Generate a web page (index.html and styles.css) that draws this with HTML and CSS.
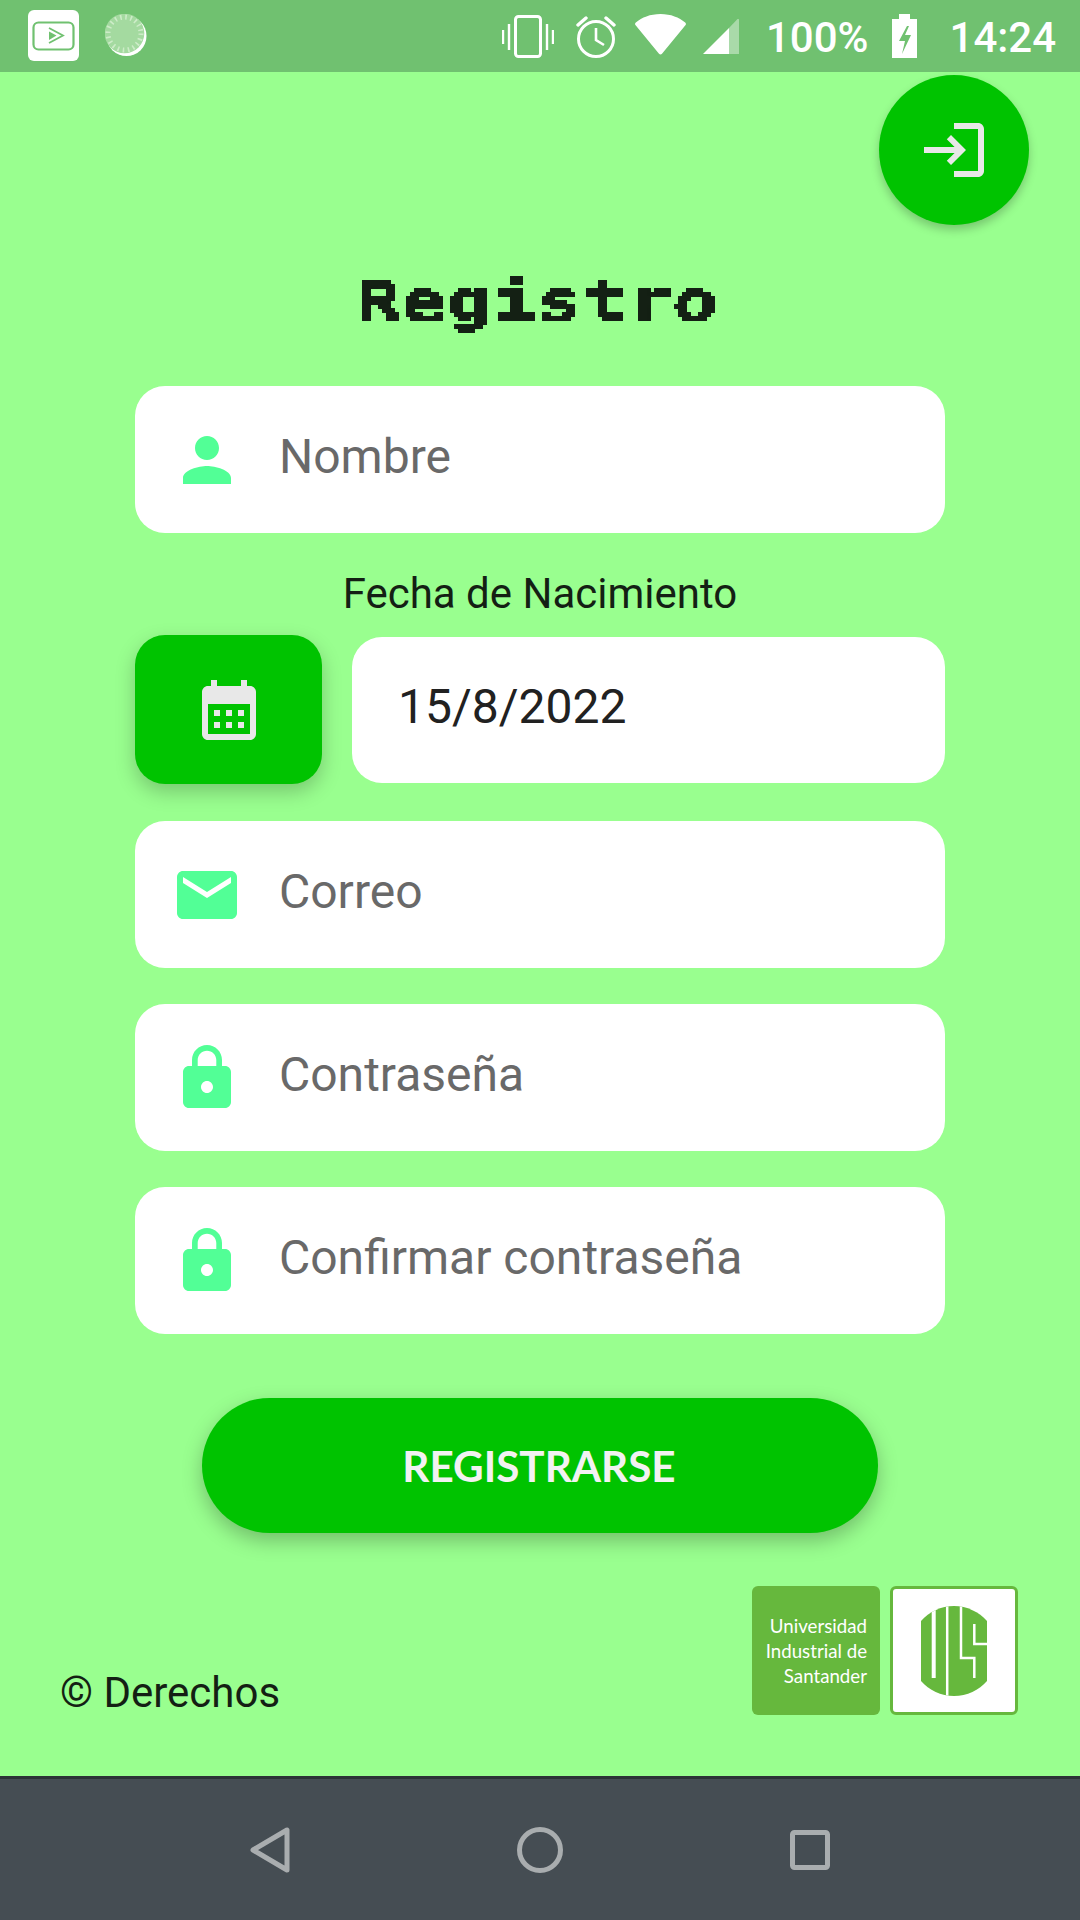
FILE: index.html
```html
<!DOCTYPE html>
<html lang="es">
<head>
<meta charset="utf-8">
<title>Registro</title>
<link rel="stylesheet" href="styles.css">
</head>
<body>
<svg class="defs" width="0" height="0" aria-hidden="true">
  <filter id="pixelate" x="0" y="0" width="100%" height="100%" color-interpolation-filters="sRGB">
    <feFlood x="2" y="2" width="1" height="1" flood-color="#000"/>
    <feComposite width="5" height="5"/>
    <feTile result="grid"/>
    <feComposite in="SourceGraphic" in2="grid" operator="in"/>
    <feMorphology operator="dilate" radius="2"/>
    <feComponentTransfer><feFuncA type="discrete" tableValues="0 0 1 1"/></feComponentTransfer>
  </filter>
</svg>
<div class="phone">
  <header class="status">
    <div class="status-left">
      <span class="app-tile">
        <svg viewBox="0 0 51 51" width="51" height="51"><rect x="5.500" y="12.500" width="40" height="27" rx="5" fill="none" stroke="#70c170" stroke-width="2.200"/><path d="M21 18l14 7.500L21 33" fill="none" stroke="#70c170" stroke-width="1.800"/><path d="M21 21.500l7.500 4-7.500 4.500z" fill="#70c170"/></svg>
      </span>
      <svg class="spinner" viewBox="0 0 44 44" width="44" height="44"><defs><filter id="soft"><feGaussianBlur stdDeviation=".6"/></filter></defs><circle cx="21.500" cy="22" r="20" fill="#fff" filter="url(#soft)"/><circle cx="19.500" cy="19.500" r="19.800" fill="#a4daa0"/><circle cx="19.500" cy="19.500" r="16.500" fill="none" stroke="#cdecc8" stroke-width="5" stroke-dasharray="1.600 3.600"/></svg>
    </div>
    <div class="status-right">
      <svg class="ic-vib" viewBox="0 0 52 44" width="52" height="44"><rect x="13.500" y="1.500" width="25" height="40" rx="3" fill="none" stroke="#fff" stroke-width="3"/><path d="M1 15v14M7 9v26M45 9v26M51 15v14" stroke="#fff" stroke-width="2.400" fill="none"/></svg>
      <svg class="ic-alarm" viewBox="0 0 40 42" width="40" height="42"><circle cx="20" cy="23" r="17.500" fill="none" stroke="#fff" stroke-width="3"/><path d="M20 12v12l8 5" fill="none" stroke="#fff" stroke-width="2.600"/><path d="M2 9l8-7M38 9l-8-7" fill="none" stroke="#fff" stroke-width="3.400" stroke-linecap="round"/></svg>
      <svg class="ic-wifi" viewBox="0 0 51 41" width="51" height="41"><path d="M25.500 0C15 0 7 3.500 .8 8.500c-.8.7-1 1.500-.4 2.400L24 39.800c.8 1 2.200 1 3 0l23.600-28.900c.6-.9.400-1.700-.4-2.400C44 3.500 36 0 25.500 0z" fill="#fff"/></svg>
      <svg class="ic-signal" viewBox="0 0 36 35" width="36" height="35"><path d="M26 9L0 35h26z" fill="#fff"/><path d="M26 9l8.500-9c1-.6 1.500 0 1.500 1v34H26z" fill="#fff" fill-opacity=".4"/></svg>
      <span class="status-text pct">100%</span>
      <svg class="ic-batt" viewBox="0 0 25 44" width="25" height="44"><path fill-rule="evenodd" d="M7 0h11v5h7v39H0V5h7zM15 12L7 27h6l-3 13 9-19h-6l4-9z" fill="#fff"/></svg>
      <span class="status-text time">14:24</span>
    </div>
  </header>

  <main class="screen">
    <button class="fab" type="button" aria-label="Entrar">
      <svg viewBox="0 0 24 24" width="72" height="72"><path d="M11 7 9.600 8.400l2.600 2.600H2v2h10.200l-2.600 2.600L11 17l5-5-5-5zm9 12h-8v2h8c1.100 0 2-.9 2-2V5c0-1.100-.9-2-2-2h-8v2h8v14z" fill="#e8e8e8"/></svg>
    </button>

    <h1 class="title"><span class="title-pixels"><span class="title-wide">Registro</span></span></h1>

    <form class="form">
      <div class="field">
        <svg class="field-icon" viewBox="0 0 24 24"><path d="M12 12c2.210 0 4-1.790 4-4s-1.790-4-4-4-4 1.790-4 4 1.790 4 4 4zm0 2c-2.670 0-8 1.340-8 4v2h16v-2c0-2.660-5.330-4-8-4z"/></svg>
        <span class="placeholder">Nombre</span>
      </div>

      <p class="date-label">Fecha de Nacimiento</p>
      <div class="date-row">
        <button class="date-btn" type="button" aria-label="Elegir fecha">
          <svg viewBox="0 0 24 24" width="72" height="72"><path d="M19 4h-1V2h-2v2H8V2H6v2H5c-1.100 0-2 .9-2 2v14c0 1.100.9 2 2 2h14c1.100 0 2-.9 2-2V6c0-1.100-.9-2-2-2zm0 16H5V10h14v10zM9 14H7v-2h2v2zm4 0h-2v-2h2v2zm4 0h-2v-2h2v2zm-8 4H7v-2h2v2zm4 0h-2v-2h2v2zm4 0h-2v-2h2v2z" fill="#e8e8e8"/></svg>
        </button>
        <div class="field field-date"><span class="value">15/8/2022</span></div>
      </div>

      <div class="field field-mail">
        <svg class="field-icon" viewBox="0 0 24 24"><path d="M20 4H4c-1.100 0-1.990.9-1.990 2L2 18c0 1.100.9 2 2 2h16c1.100 0 2-.9 2-2V6c0-1.100-.9-2-2-2zm0 4l-8 5-8-5V6l8 5 8-5v2z"/></svg>
        <span class="placeholder">Correo</span>
      </div>
      <div class="field field-gap">
        <svg class="field-icon" viewBox="0 0 24 24"><path d="M18 8h-1V6c0-2.760-2.240-5-5-5S7 3.240 7 6v2H6c-1.100 0-2 .9-2 2v10c0 1.100.9 2 2 2h12c1.100 0 2-.9 2-2V10c0-1.100-.9-2-2-2zm-6 9c-1.100 0-2-.9-2-2s.9-2 2-2 2 .9 2 2-.9 2-2 2zm3.100-9H8.900V6c0-1.710 1.390-3.100 3.100-3.100 1.710 0 3.100 1.390 3.100 3.100v2z"/></svg>
        <span class="placeholder">Contraseña</span>
      </div>
      <div class="field field-gap">
        <svg class="field-icon" viewBox="0 0 24 24"><path d="M18 8h-1V6c0-2.760-2.240-5-5-5S7 3.240 7 6v2H6c-1.100 0-2 .9-2 2v10c0 1.100.9 2 2 2h12c1.100 0 2-.9 2-2V10c0-1.100-.9-2-2-2zm-6 9c-1.100 0-2-.9-2-2s.9-2 2-2 2 .9 2 2-.9 2-2 2zm3.100-9H8.900V6c0-1.710 1.390-3.100 3.100-3.100 1.710 0 3.100 1.390 3.100 3.100v2z"/></svg>
        <span class="placeholder">Confirmar contraseña</span>
      </div>

      <button class="submit" type="button">REGISTRARSE</button>
    </form>

    <footer class="foot">
      <span class="rights">© Derechos</span>
      <div class="logos">
        <div class="logo-text"><span>Universidad</span><span>Industrial de</span><span>Santander</span></div>
        <div class="logo-mark">
          <svg viewBox="0 0 66 90" width="66" height="90">
            <defs><clipPath id="uis"><path d="M0 15C8 6 20 0 33 0s25 6 33 15v60C58 84 46 90 33 90S8 84 0 75z"/></clipPath></defs>
            <g clip-path="url(#uis)">
              <rect width="66" height="90" fill="#66b83d"/>
              <path d="M12.700 0v72" fill="none" stroke="#fff" stroke-width="4"/>
              <path d="M26.200 0v90M40 0v52H53.300V72M53.300 18v20H66" fill="none" stroke="#fff" stroke-width="2.500"/>
            </g>
          </svg>
        </div>
      </div>
    </footer>
  </main>

  <nav class="navbar">
    <svg viewBox="0 0 40 46" width="40" height="46"><path d="M37 3v40L3 23z" fill="none" stroke="#a9adaf" stroke-width="5" stroke-linejoin="round"/></svg>
    <svg viewBox="0 0 46 46" width="46" height="46"><circle cx="23" cy="23" r="20.500" fill="none" stroke="#a9adaf" stroke-width="5"/></svg>
    <svg viewBox="0 0 40 40" width="40" height="40"><rect x="2.500" y="2.500" width="35" height="35" rx="2" fill="none" stroke="#a9adaf" stroke-width="5"/></svg>
  </nav>
</div>
</body>
</html>
```
FILE: styles.css
```css
* { box-sizing: border-box; }
html, body { margin: 0; padding: 0; }
body { font-family: Roboto, "Liberation Sans", sans-serif; background: #99ff8f; }
.defs { position: absolute; }
.phone { width: 1080px; height: 1920px; display: flex; flex-direction: column; overflow: hidden; }

.status { height: 72px; flex: none; background: #70c170; display: flex; justify-content: space-between; align-items: flex-start; }
.status-left { display: flex; align-items: flex-start; padding: 10px 0 0 28px; gap: 26px; }
.app-tile { width: 51px; height: 51px; background: #fff; border-radius: 6px; display: block; }
.app-tile svg { display: block; }
.spinner { margin-top: 4px; }
.status-right { position: relative; width: 580px; height: 72px; display: flex; align-items: flex-start; }
.status-right svg { flex: none; }
.ic-vib { margin: 15px 0 0 2px; }
.ic-alarm { margin: 16px 0 0 22px; }
.ic-wifi { margin: 14px 0 0 19px; }
.ic-signal { margin: 19px 0 0 17px; }
.status-text { color: #fff; font-weight: 500; font-size: 42px; line-height: 47px; margin-top: 14px; white-space: nowrap; }
.pct { margin-left: 27px; }
.ic-batt { margin: 14px 0 0 23px; }
.time { margin-left: 33px; }

.screen { flex: 1; position: relative; background: #99ff8f; display: flex; flex-direction: column; }
.fab { position: absolute; top: 3px; left: 879px; width: 150px; height: 150px; border: 0; padding: 0; border-radius: 50%; background: #00c300; box-shadow: 0 5px 10px rgba(0,0,0,.22); display: flex; align-items: center; justify-content: center; }

.title { margin: 199px 0 0; height: 60px; display: flex; justify-content: center; font-weight: 700; font-size: 48px; line-height: 60px; color: #142014; }
.title-pixels { width: 316px; height: 60px; display: block; transform: scale(1.134); filter: url(#pixelate); }
.title-wide { display: block; width: 232px; margin-left: 40px; font-family: "DejaVu Sans Mono", monospace; transform: scaleX(1.38); white-space: nowrap; }

.form { margin: 55px 135px 0; display: flex; flex-direction: column; }
.field { height: 147px; background: #fff; border-radius: 30px; display: flex; align-items: center; padding-left: 36px; }
.field-icon { width: 72px; height: 72px; flex: none; fill: #52ff96; }
.placeholder { margin-left: 36px; padding-bottom: 6px; font-size: 48px; line-height: 56px; color: #696969; }
.date-label { margin: 37px 0 0; height: 65px; text-align: center; font-size: 42px; line-height: 47px; color: #141f14; }
.date-row { display: flex; align-items: center; gap: 30px; height: 149px; }
.date-btn { width: 187px; height: 149px; flex: none; border: 0; padding: 0; border-radius: 30px; background: #00c300; box-shadow: 0 8px 20px rgba(0,0,0,.22); display: flex; align-items: center; justify-content: center; }
.field-date { flex: 1; height: 146px; padding-left: 46px; }
.value { padding-bottom: 6px; font-size: 48px; line-height: 56px; color: #212121; }
.field-mail { margin-top: 37px; }
.field-gap { margin-top: 36px; }
.submit { align-self: center; margin-top: 64px; width: 676px; height: 135px; border: 0; padding: 0 2px 0 0; border-radius: 68px; background: #00c300; box-shadow: 0 8px 20px rgba(0,0,0,.25); font-family: Lato, sans-serif; font-weight: 700; font-size: 42.2px; color: #f2f2f2; }

.foot { margin: 53px 62px 0 60px; display: flex; justify-content: space-between; align-items: flex-end; }
.rights { font-size: 42px; line-height: 47px; margin-bottom: -1px; color: #141f14; }
.logos { display: flex; gap: 10px; }
.logo-text { width: 128px; height: 129px; border-radius: 6px; background: #66b83d; padding: 28px 13px 0 0; display: flex; flex-direction: column; align-items: flex-end; font-family: Lato, sans-serif; font-size: 18.7px; line-height: 25px; color: #fff; white-space: nowrap; }
.logo-mark { width: 128px; height: 129px; border-radius: 6px; border: 3px solid #66b83d; background: #fff; display: flex; align-items: center; justify-content: center; }

.navbar { height: 144px; flex: none; background: #454d53; border-top: 3px solid #2c3336; display: flex; justify-content: space-between; align-items: center; padding: 0 250px; }
```
